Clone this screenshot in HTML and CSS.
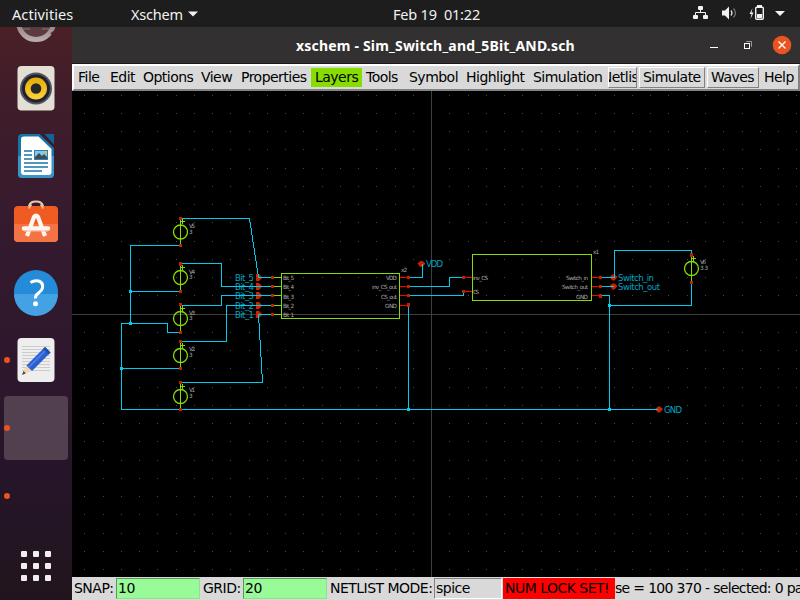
FILE: index.html
```html
<!DOCTYPE html>
<html lang="en">
<head>
<meta charset="utf-8">
<title>xschem - Sim_Switch_and_5Bit_AND.sch</title>
<link rel="stylesheet" href="styles.css">
</head>
<body>
<header class="topbar">
  <span class="activities">Activities</span>
  <span class="appmenu">Xschem</span>
  <svg class="caret" width="10" height="6" viewBox="0 0 10 6"><path d="M0 .5h10L5 5.5z" fill="#f2f2f2"/></svg>
  <span class="clock">Feb 19&nbsp; 01:22</span>
  <svg class="tray" width="108" height="27" viewBox="692 0 108 27" fill="#f2f2f2">
    <rect x="698" y="6" width="5" height="4" rx="1"/><rect x="693" y="15" width="5" height="4" rx="1"/><rect x="703" y="15" width="5" height="4" rx="1"/>
    <path d="M700.5 9v3.5M695.5 15v-2.5h10V15" fill="none" stroke="#f2f2f2"/>
    <g transform="translate(29 0)"><path d="M693 10.500h3l4-4v13l-4-4h-3z"/><path d="M702 10.500q2 2.500 0 5" fill="none" stroke="#ddd" stroke-width="1.300"/><path d="M704.500 8.500q4 4.500 0 9" fill="none" stroke="#777" stroke-width="1.200"/></g>
    <path d="M752.500 8l-3 6h2l-1 5 3-6.500h-2z"/>
    <rect x="755.700" y="7.200" width="7.600" height="12" rx="1" fill="none" stroke="#f2f2f2" stroke-width="1.400"/><rect x="757" y="5" width="5" height="2"/><rect x="757" y="14" width="5" height="4"/>
    <path d="M775 11h10l-5 5z"/>
  </svg>
</header>
<div class="desktop">
  <nav class="dock">
    <svg width="72" height="573" viewBox="0 27 72 573">
      <defs>
        <linearGradient id="silver" x1="0" y1="0" x2="0" y2="1"><stop offset="0" stop-color="#65494b"/><stop offset="1" stop-color="#b8aaac"/></linearGradient>
        <linearGradient id="gold" x1="0" y1="0" x2="0" y2="1"><stop offset="0" stop-color="#e2ac08"/><stop offset="1" stop-color="#ffd23a"/></linearGradient>
      </defs>
      <circle cx="36" cy="22" r="17.500" fill="#5b3b3f" stroke="url(#silver)" stroke-width="5"/>
      <path d="M23 29h7M42 29h7" stroke="#8a7476"/><path d="M51 34l4-3" stroke="#4a282b" stroke-width="2"/>
      <rect x="17.500" y="66" width="37" height="44.500" rx="4" fill="#e3dfd5"/>
      <circle cx="36" cy="88.500" r="16" fill="#52555e"/><circle cx="36" cy="88.500" r="14" fill="#202131"/><circle cx="36" cy="88.500" r="11" fill="url(#gold)"/><circle cx="36" cy="88.500" r="5.300" fill="#23272a"/>
      <path d="M22 134h17.500L54 148v26q0 4-4 4H22q-4 0-4-4v-36q0-4 4-4z" fill="#1874a7"/><path d="M18 156h36v18q0 4-4 4H22q-4 0-4-4z" fill="#3995c5"/>
      <path d="M44.500 134H54v10.500z" fill="#0f659a"/>
      <path d="M24 136.500h14.500L51.500 149v23q0 3-3 3H24q-3 0-3-3v-32.500q0-3 3-3z" fill="#fff"/>
      <path d="M24 151h8M24 155h8M24 159h8M24 163h24M24 167h24M24 171h18" stroke="#1874a7" stroke-width="1.600"/>
      <rect x="34" y="150" width="14" height="10" fill="#2784b8"/><rect x="35" y="151" width="12" height="8" fill="#89c5e8"/><path d="M35 159v-2l4-4 3 3 2-2 3 3v2z" fill="#454a50"/><path d="M44 151h3v3z" fill="#f5bd22"/>
      <path d="M29 208v-2q1-4.500 7-4.500t7 4.500v2" fill="none" stroke="#e9ca9f" stroke-width="2"/>
      <rect x="14" y="206" width="44" height="36" rx="4" fill="#f05b24"/><path d="M14 224h44v14q0 4-4 4H18q-4 0-4-4z" fill="#f47345"/>
      <path d="M29 208.500q.500-3 2.500-4M43 208.500q-.500-3-2.500-4" stroke="#e9ca9f" stroke-width="2" fill="none"/>
      <path d="M27 236l7-19q2-3 4 0l7 19" fill="none" stroke="#fff6f0" stroke-width="4.200"/><path d="M24 228.500h24" fill="none" stroke="#fff6f0" stroke-width="4.500" stroke-linecap="round"/><path d="M24 231h24" stroke="#f8b79c"/>
      <circle cx="36" cy="292" r="22" fill="#248bd9"/><path d="M14 294h44a22 22 0 0 1-44 0z" fill="#44a1e4"/>
      <path d="M30.500 282.500q4-2.500 8-1.500 5 1.500 4 7-.500 2.500-4 5t-3 5.500" fill="none" stroke="#fff" stroke-width="3"/><circle cx="35.500" cy="303.800" r="2.500" fill="#fff"/>
      <rect x="17.500" y="338" width="37" height="44" rx="4" fill="#eee"/>
      <path d="M22 346.500h28M22 349.500h28M22 352.500h28M22 355.500h28M22 358.500h28M22 361.500h28M22 364.500h28M22 367.500h28M22 370.500h28" stroke="#ccc"/>
      <path d="M22 375l4.500-10 5.500 5.500z" fill="#f4d4b4"/><path d="M26.500 365.500L45 347l5.500 5.500L32 371z" fill="#2b5ed0"/><path d="M28.500 367.500l18.500-18.500" stroke="#4a7ce8" stroke-width="2"/><path d="M45 347l5.500 5.500-2 2L43 349z" fill="#244cae"/><path d="M22 375l1.500-4 2.300 2.300z" fill="#444"/>
      <rect x="4" y="396" width="64" height="64" rx="4" fill="#52404f"/>
      <g fill="#ed5320"><circle cx="7" cy="360" r="3"/><circle cx="7" cy="428" r="3"/><circle cx="7" cy="496" r="3"/></g>
      <g fill="#f0eeee"><rect x="21" y="551" width="6" height="6" rx="1"/><rect x="33" y="551" width="6" height="6" rx="1"/><rect x="45" y="551" width="6" height="6" rx="1"/><rect x="21" y="563" width="6" height="6" rx="1"/><rect x="33" y="563" width="6" height="6" rx="1"/><rect x="45" y="563" width="6" height="6" rx="1"/><rect x="21" y="575" width="6" height="6" rx="1"/><rect x="33" y="575" width="6" height="6" rx="1"/><rect x="45" y="575" width="6" height="6" rx="1"/></g>
    </svg>
  </nav>
  <main class="window">
    <div class="titlebar">
      <h1 class="title">xschem - Sim_Switch_and_5Bit_AND.sch</h1>
      <svg class="controls" width="100" height="36" viewBox="700 27 100 36">
        <path d="M710 47.500h8" stroke="#fff"/>
        <path d="M746.500 42v-.500h5v5h-.500" fill="none" stroke="#999"/><rect x="744.500" y="43.500" width="5" height="5" fill="none" stroke="#fff"/>
        <circle cx="782" cy="45" r="9.300" fill="#e95420"/><path d="M778.500 41.500l7 7M785.500 41.500l-7 7" stroke="#fff" stroke-width="1.400"/>
      </svg>
    </div>
    <div class="menubar">
      <span class="item file">File</span><span class="item edit">Edit</span><span class="item options">Options</span><span class="item view">View</span><span class="item properties">Properties</span><span class="item layers">Layers</span><span class="item tools">Tools</span><span class="item symbol">Symbol</span><span class="item highlight">Highlight</span><span class="item simulation">Simulation</span><span class="button netlist"><span>Netlist</span></span><span class="button simulate">Simulate</span><span class="button waves">Waves</span><span class="item help">Help</span>
    </div>
    <svg class="canvas" width="728" height="486" viewBox="72 91 728 486">
      <defs>
        <g id="source">
          <path d="M.5 0v28M0 3.500h5M2.500 1v5" stroke="#88dd00" fill="none" shape-rendering="crispEdges"/>
          <circle cx=".5" cy="14" r="7" fill="none" stroke="#88dd00" stroke-width="1.300"/>
        </g>
        <path id="flag" d="M-2-3h3l3.500 3.500L1 4h-3z"/>
        <path id="tag" d="M-4 0L-1-2.500h2L4 0 1 3.500h-2z"/>
      </defs>
      <path id="dots" fill="#484848" shape-rendering="crispEdges"/>
      <path d="M431.500 91v486M72 314.500h728" stroke="#3f3f3f" shape-rendering="crispEdges"/>
      <g>
        <use href="#source" x="180" y="218"/><use href="#source" x="180" y="263.500"/><use href="#source" x="180" y="304.500"/><use href="#source" x="180" y="341.500"/><use href="#source" x="180" y="382.500"/><use href="#source" x="691" y="254.500"/>
      </g>
      <g class="net-labels">
        <text x="235" y="281" textLength="19">Bit_5</text><text x="235" y="290" textLength="19">Bit_4</text><text x="235" y="299" textLength="19">Bit_3</text><text x="235" y="309" textLength="19">Bit_2</text><text x="235" y="318" textLength="19">Bit_1</text>
        <text x="426" y="267" textLength="17">VDD</text><text x="618" y="281" textLength="36">Switch_in</text><text x="618" y="290" textLength="42">Switch_out</text><text x="664" y="413" textLength="18">GND</text>
      </g>
      <g class="pin-labels">
        <text x="283" y="280" textLength="11">Bit_5</text><text x="283" y="289" textLength="11">Bit_4</text><text x="283" y="299" textLength="11">Bit_3</text><text x="283" y="308" textLength="11">Bit_2</text><text x="283" y="317" textLength="11">Bit_1</text>
        <text x="386" y="280" textLength="11">VDD</text><text x="372" y="289" textLength="25">inv_CS_out</text><text x="381" y="299" textLength="16">CS_out</text><text x="385" y="308" textLength="12">GND</text>
        <text x="473" y="280" textLength="15">inv_CS</text><text x="473" y="294" textLength="6">CS</text>
        <text x="566" y="280" textLength="22">Switch_in</text><text x="562" y="289" textLength="26">Switch_out</text><text x="576" y="299" textLength="12">GND</text>
        <text x="401" y="272" textLength="6">x2</text><text x="593" y="254" textLength="6">x1</text>
        <text x="189" y="228" textLength="6">V5</text><text x="189" y="234">3</text><text x="189" y="274" textLength="6">V4</text><text x="189" y="279">3</text><text x="189" y="315" textLength="6">V3</text><text x="189" y="320">3</text><text x="189" y="351" textLength="6">V2</text><text x="189" y="357">3</text><text x="189" y="392" textLength="6">V1</text><text x="189" y="398">3</text><text x="700" y="264" textLength="6">V6</text><text x="700" y="270" textLength="8">3.3</text>
      </g>
      <g fill="#cc2200">
        <use href="#flag" x="258" y="277"/><use href="#flag" x="258" y="286"/><use href="#flag" x="258" y="295"/><use href="#flag" x="258" y="305"/><use href="#flag" x="258" y="314"/>
        <use href="#tag" x="421.500" y="263.500"/><use href="#tag" x="613.500" y="277"/><use href="#tag" x="613.500" y="286"/><use href="#tag" x="659" y="409"/>
      </g>
      <g fill="none" shape-rendering="crispEdges">
        <path stroke="#ff0000" d="M400 277.500h8M400 286.500h8M400 295.500h8M400 305.500h8M463 277.500h9M463 291.500h9M592 277.500h8M592 286.500h8M592 295.500h8"/>
        <path class="wire" d="M180 218.500h69.500L258.500 277.500H272M180 245.500h-49.500v78M130 291.500h50M180 263.500h41.500v23H272M180 305.500h41.500v-10H272M272 305.500h-45.500v36H180M272 314.500h-13.500L262.500 382.500H180M180 332.500h-12.500v-9h-46v86H658M121 368.500h59M408 277.500h14.500V264M408 286.500h41.500v-9H463M408 295.500h55.500v-4M408.500 305v104M600 277.500h14.500v-27h77v5M691.500 282v23.500h-82M600 286.500h14M600 295.500h9.500v114"/>
        <path stroke="#88dd00" d="M281.500 273.500h118v45h-118zM472.500 254.500h119v46h-119zM272 277.500h9M272 286.500h9M272 295.500h9M272 305.500h9M272 314.500h9"/>
      </g>
      <g fill="#bb2200">
        <path d="M179 217h3v3h-3zM179 244h3v3h-3zM179 262h3v4h-3zM179 290h3v3h-3zM179 303h3v3h-3zM179 331h3v3h-3zM179 340h3v3h-3zM179 367h3v3h-3zM179 381h3v3h-3zM179 408h3v3h-3zM690 253h3v4h-3zM690 281h3v3h-3z"/>
        <path d="M271 276h3v3h-3zM271 285h3v3h-3zM271 294h3v3h-3zM271 304h3v3h-3zM271 313h3v3h-3zM407 276h3v3h-3zM407 285h3v3h-3zM407 294h3v3h-3zM407 303h3v4h-3zM462 276h3v3h-3zM462 290h3v3h-3zM599 276h3v3h-3zM599 285h3v3h-3zM599 294h3v4h-3z"/>
      </g>
      <path fill="#00ccee" d="M129 290h3v3h-3zM129 322h3v3h-3zM120 367h3v3h-3zM407 408h3v3h-3zM608 304h3v3h-3zM608 408h3v3h-3z"/>
    </svg>
    <footer class="statusbar">
      <label class="snap">SNAP:</label><span class="field green">10</span><label class="grid">GRID:</label><span class="field green">20</span><label class="mode">NETLIST MODE:</label><span class="field spice">spice</span><span class="lock">NUM LOCK SET!</span><span class="info">se = 100 370 - selected: 0 path:</span>
    </footer>
  </main>
</div>
<script src="grid.js"></script>
</body>
</html>
```
FILE: grid.js
```js
// Grid points of the schematic canvas, one pixel each.
let d = "";
for (let row = 0; row < 27; row++) {
  for (let col = 0; col < 40; col++) {
    const x = Math.floor(84.8 + col * 18.256);
    const y = Math.floor(95.1 + row * 18.256);
    d += `M${x} ${y}h1v1h-1z`;
  }
}
document.getElementById("dots").setAttribute("d", d);
```
FILE: styles.css
```css
* { box-sizing: border-box; }
body { margin: 0; width: 800px; height: 600px; overflow: hidden; background: #000; font-family: "DejaVu Sans", sans-serif; font-size: 14px; letter-spacing: -0.52px; color: #000; }
svg { display: block; flex: none; letter-spacing: 0; }
.topbar { display: flex; align-items: center; height: 27px; background: #1d1d1d; color: #f2f2f2; font-family: "Noto Sans", sans-serif; font-size: 14.5px; letter-spacing: 0.1px; white-space: nowrap; }
.activities { width: 119px; padding-left: 12px; }
.appmenu { width: 57px; margin-left: 12px; letter-spacing: -0.2px; }
.caret { margin-right: 195px; }
.clock { width: 90px; letter-spacing: -0.2px; }
.tray { margin-left: auto; }
.desktop { display: flex; height: 573px; }
.dock { width: 72px; background: linear-gradient(#4a2025 0, #401d2a 70px, #351a2e 200px, #2d172c 350px, #26152a 440px, #21151d 573px); }
.window { width: 728px; display: flex; flex-direction: column; }
.titlebar { display: flex; align-items: center; height: 37px; background: #323030; border-bottom: 1px solid #1d171b; }
.title { margin: 0; padding-left: 224px; width: 628px; color: #fff; font: bold 14px "Noto Sans", sans-serif; letter-spacing: 0.19px; white-space: nowrap; }
.menubar { display: flex; align-items: center; height: 27px; background: #d9d9d9; border: 2px solid; border-color: #fff #828282 #828282 #fff; white-space: nowrap; flex: none; }
.item, .button { display: block; flex: none; height: 19px; line-height: 19px; padding-left: 4px; }
.file { width: 32px; }
.edit { width: 33px; }
.options { width: 58px; }
.view { width: 40px; }
.properties { width: 74px; }
.layers { width: 51px; background: #88dd00; }
.tools { width: 43px; }
.symbol { width: 57px; }
.highlight { width: 67px; }
.simulation { width: 79px; }
.button { border: 1px solid; border-color: #fff #828282 #828282 #fff; height: 21px; padding-left: 3px; }
.netlist { display: flex; justify-content: center; width: 29px; overflow: hidden; padding: 0; margin-right: 2px; }
.simulate { width: 66px; margin-right: 2px; }
.waves { width: 52px; margin-right: 1px; }
.canvas { background: #000; }
.wire { stroke: #00ccee; }
.net-labels { fill: #00a5c4; font-size: 8.5px; }
.pin-labels { fill: #aaa; font-size: 5.7px; }
.statusbar { display: flex; align-items: center; height: 23px; background: #d9d9d9; white-space: nowrap; overflow: hidden; flex: none; }
.statusbar > * { flex: none; height: 21px; line-height: 21px; }
.snap { width: 44px; padding-left: 2px; }
.grid { width: 43px; padding-left: 3px; }
.mode { width: 107px; padding-left: 3px; }
.statusbar .field { line-height: 19px; border: 1px solid; border-color: #828282 #fff #fff #828282; width: 84px; padding-left: 1px; }
.statusbar .green { background: #98fb98; border-color: #5b975b #8de08d #8de08d #5b975b; }
.statusbar .spice { width: 68px; margin-right: 1px; }
.lock { width: 112px; padding-left: 2px; background: #f00; }
.info { letter-spacing: -0.68px; }
```
